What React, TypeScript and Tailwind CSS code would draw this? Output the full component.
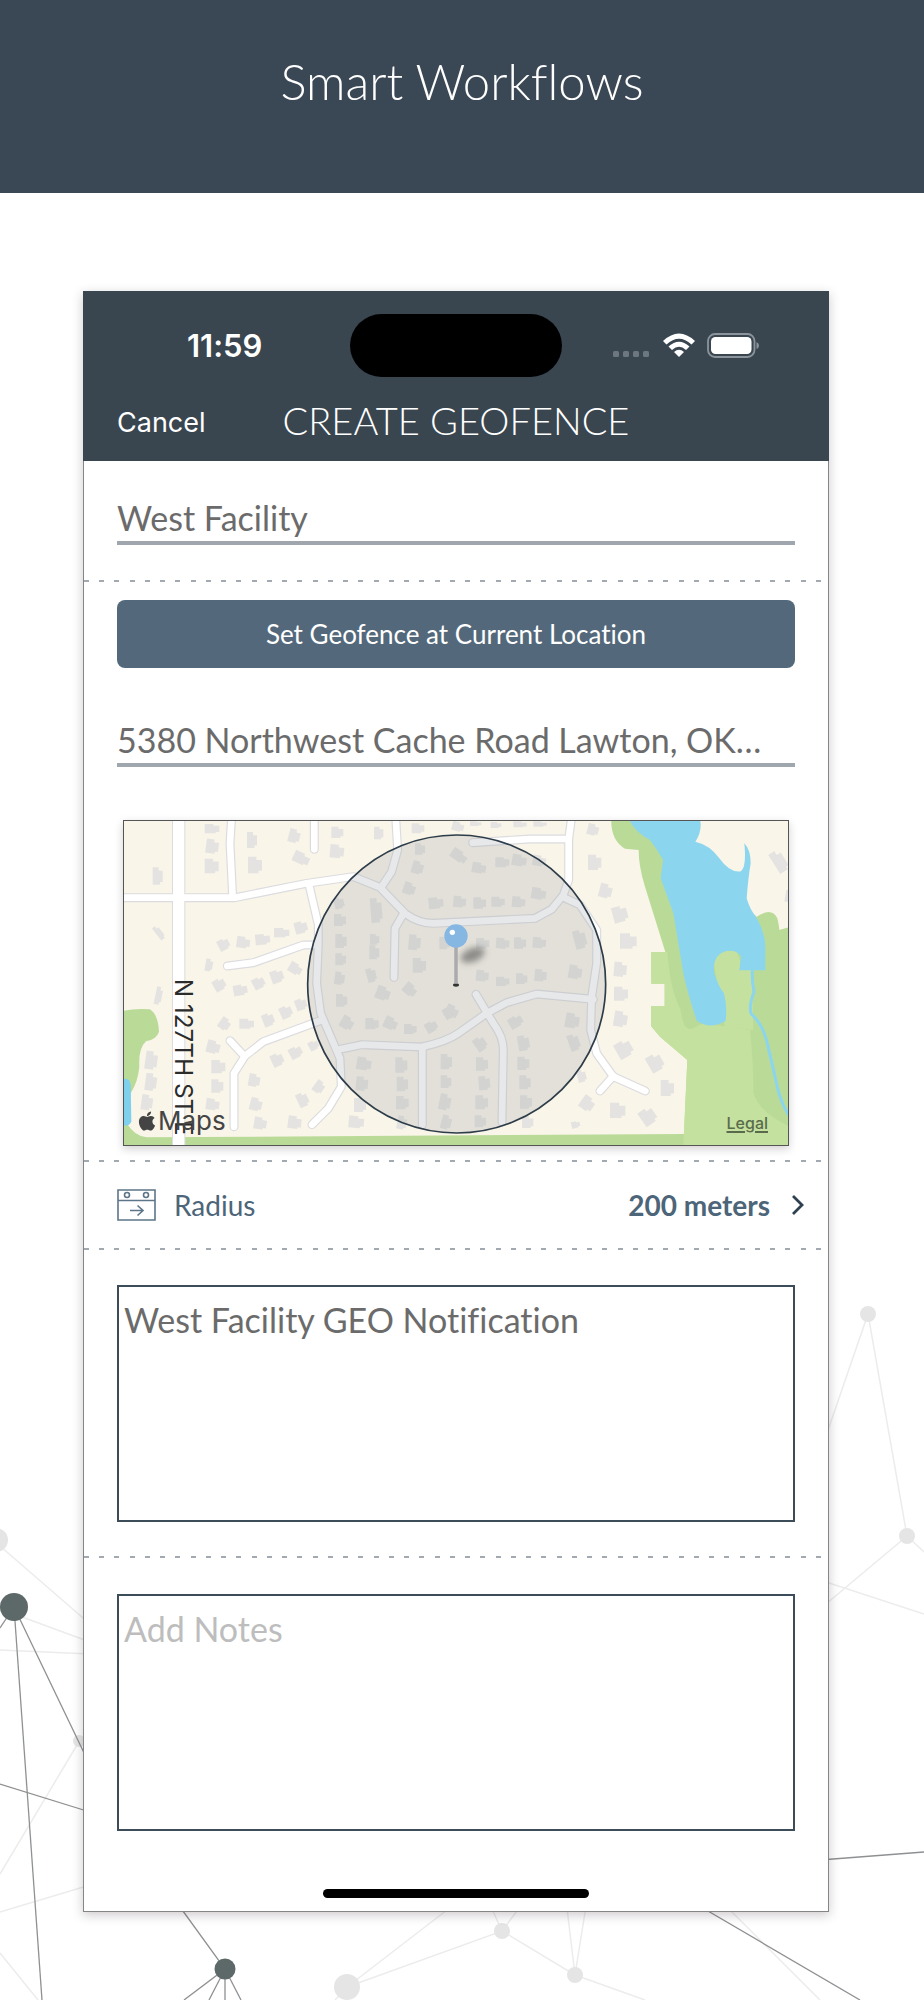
import { FaApple } from "react-icons/fa";

// x, y, width, height, rotation
const houses = [
  [284, 42, 44, 28, 0], [288, 88, 38, 42, 8], [284, 146, 42, 44, 0], [411, 66, 30, 48, 0], [414, 140, 42, 50, 0],
  [536, 58, 34, 40, 15], [549, 128, 50, 34, 25], [664, 50, 36, 34, 0], [660, 104, 42, 40, 5], [792, 50, 28, 38, 0],
  [905, 40, 38, 30, 0], [915, 100, 30, 34, 0], [128, 172, 30, 52, 0], [138, 345, 18, 46, -38], [136, 530, 20, 54, 12],
  [324, 386, 34, 34, -28], [380, 380, 40, 34, 8], [436, 372, 44, 32, -6], [492, 354, 46, 28, 0], [554, 334, 38, 36, -15],
  [286, 446, 22, 38, 10], [310, 506, 36, 36, -30], [370, 524, 42, 32, -10], [428, 502, 36, 34, -28], [482, 480, 38, 38, -20],
  [536, 460, 40, 32, 30], [556, 566, 34, 34, -20], [510, 588, 36, 36, -25], [458, 610, 34, 38, -22], [388, 626, 44, 30, 0],
  [328, 624, 32, 36, 35], [290, 692, 40, 38, 15], [304, 750, 42, 40, 0], [304, 808, 36, 40, 0], [288, 866, 40, 34, 8],
  [484, 730, 36, 38, -25], [538, 710, 38, 34, -28], [596, 692, 30, 28, -28], [416, 792, 34, 38, 10], [420, 864, 36, 38, 15],
  [432, 922, 38, 36, 10], [534, 918, 40, 38, 8], [562, 848, 32, 42, -25], [612, 812, 30, 38, 35], [716, 918, 46, 36, 5],
  [106, 724, 36, 54, 8], [106, 790, 34, 52, 8], [94, 854, 34, 46, 8],
  [672, 262, 30, 34, -15], [672, 312, 36, 36, 0], [676, 372, 34, 42, 0], [676, 430, 32, 36, 0], [674, 486, 30, 38, 8],
  [678, 552, 34, 38, 0], [782, 264, 34, 74, -5], [780, 372, 28, 32, 0], [778, 406, 30, 42, 0], [770, 474, 28, 42, -15],
  [692, 620, 38, 38, 30], [766, 624, 40, 34, 0], [822, 622, 40, 36, 25], [882, 642, 38, 30, 0], [946, 634, 36, 32, -30],
  [1006, 586, 38, 38, 25], [798, 530, 42, 40, 20], [880, 522, 40, 34, 40], [896, 374, 36, 46, 5], [908, 444, 40, 44, 0],
  [906, 154, 34, 38, 15], [880, 218, 36, 36, 20], [956, 262, 44, 34, -5], [740, 742, 44, 38, 10], [738, 800, 36, 42, 5],
  [732, 864, 36, 42, 0], [856, 742, 36, 46, 0], [860, 800, 34, 44, 0], [858, 858, 38, 40, 0], [992, 732, 34, 46, 0],
  [992, 796, 32, 38, 0], [988, 852, 34, 48, 12], [994, 916, 30, 42, 15], [862, 918, 28, 40, 12], [988, 380, 30, 38, 0],
  [1022, 122, 50, 32, 35], [1026, 36, 36, 28, 15], [1086, 158, 42, 32, 10], [1156, 142, 42, 30, 0], [1206, 134, 44, 34, 10],
  [1268, 136, 40, 32, 10], [1080, 34, 34, 14, 0], [1142, 36, 32, 18, 0], [1210, 34, 40, 18, 0], [1270, 34, 40, 16, 0],
  [1030, 258, 38, 34, 5], [1090, 262, 38, 34, 0], [1144, 260, 40, 30, 0], [1206, 260, 40, 32, 5], [1264, 234, 44, 34, 10],
  [1098, 384, 40, 32, 0], [1158, 384, 40, 32, 5], [1212, 382, 36, 34, 0], [1268, 382, 40, 32, 5], [1098, 480, 38, 34, 5],
  [1158, 500, 40, 28, 0], [1218, 490, 34, 32, 0], [1274, 478, 36, 36, 5], [1392, 360, 36, 56, -15], [1376, 466, 40, 40, 10],
  [1366, 610, 42, 44, 10], [1376, 672, 32, 50, -20], [1196, 618, 42, 34, -30], [1094, 680, 34, 42, -35], [1224, 676, 34, 46, -10],
  [1222, 740, 36, 40, 0], [1228, 796, 34, 42, 0], [1230, 856, 36, 40, 0], [1236, 918, 34, 36, 0], [1098, 742, 36, 40, 0],
  [1106, 798, 34, 42, -5], [1096, 856, 38, 42, 0], [1094, 916, 34, 36, 0], [1000, 590, 36, 34, -30], [1402, 780, 26, 36, -15],
  [1432, 42, 34, 34, 15], [1434, 134, 40, 46, 0], [1468, 222, 38, 42, 15], [1508, 288, 44, 48, -15], [1530, 370, 50, 46, 0],
  [1512, 456, 38, 44, 5], [1512, 530, 42, 42, 0], [1512, 604, 40, 46, 10], [1518, 692, 48, 50, -30], [1614, 732, 44, 52, -30],
  [1412, 860, 40, 42, 35], [1500, 878, 46, 46, 0], [1592, 894, 44, 50, -35], [1652, 810, 40, 48, 0], [1384, 934, 26, 20, -15],
  [1990, 120, 36, 68, -32], [2026, 240, 16, 36, 10],
];

const roads = [
  "M39 263H375L590 220L730 200L810 232L885 310Q925 340 970 340L1275 325L1325 298L1360 255L1376 210V88L1385 20",
  "M365 20L360 100L368 260",
  "M613 20V118",
  "M857 20L863 120L845 185L815 230",
  "M598 228L625 345V400L620 520L632 610L690 745L694 830L655 895L606 944",
  "M352 468L430 458L580 405H622",
  "M636 630L460 695L405 738L372 790V950",
  "M360 692L400 735",
  "M878 315L855 355L852 502",
  "M690 718L755 704L935 711Q1010 695 1045 670L1130 610L1190 578L1280 552L1450 568",
  "M937 712V944",
  "M1098 553L1150 640Q1180 680 1180 720L1176 936",
  "M1360 262L1410 285L1460 360L1460 460L1445 560L1442 660L1460 730L1510 800L1606 843",
  "M1510 798L1470 843",
  "M1088 98L1260 87H1376",
];

const background = {
  faint: [
    "M0 1546L90 1624", "M14 1614L90 1642", "M0 1650L90 1654", "M80 1740L0 1874", "M0 1912L90 1885", "M0 1953L38 2000",
    "M868 1314L826 1436", "M868 1314L907 1536L826 1604", "M907 1536L924 1552", "M826 1582L924 1614",
    "M347 1987L460 1900", "M347 1987L502 1931L575 1975L645 2000", "M488 1900L502 1931L522 1904", "M566 1900L575 1975L587 1900",
    "M720 1900L820 2000", "M347 1987L335 2000",
  ],
  dark: [
    "M14 1607L0 1628", "M14 1607L42 2000", "M14 1607L86 1757", "M0 1784L90 1812", "M175 1900L225 1969L184 2000",
    "M225 1969L209 2000", "M225 1969V2000", "M225 1969L241 2000", "M820 1860L924 1852", "M696 1904L860 2000",
  ],
};

function Network() {
  return (
    <svg viewBox="0 0 924 2000" className="absolute bottom-0 left-0 -z-10 w-full" fill="none" aria-hidden="true">
      <g stroke="#ececec" strokeWidth="1.5">
        {background.faint.map((d) => <path key={d} d={d} />)}
      </g>
      <g fill="#e5e5e5">
        <circle cx="-4" cy="1540" r="12" />
        <circle cx="79" cy="1741" r="6" />
        <circle cx="868" cy="1314" r="8" />
        <circle cx="907" cy="1536" r="8" />
        <circle cx="347" cy="1987" r="13" />
        <circle cx="502" cy="1931" r="8" />
        <circle cx="575" cy="1975" r="8" />
      </g>
      <g stroke="#8e9092" strokeWidth="1.3">
        {background.dark.map((d) => <path key={d} d={d} />)}
      </g>
      <circle cx="14" cy="1607" r="14" fill="#5d6868" />
      <circle cx="225" cy="1969" r="10.500" fill="#5d6868" />
    </svg>
  );
}

function StatusIcons() {
  return (
    <div className="flex items-center">
      <svg width="38" height="26" viewBox="0 0 38 26" fill="#6c7780" aria-hidden="true">
        <rect x="0" y="18" width="6" height="6" rx="1.500" />
        <rect x="10" y="18" width="6" height="6" rx="1.500" />
        <rect x="20" y="18" width="6" height="6" rx="1.500" />
        <rect x="30" y="18" width="6" height="6" rx="1.500" />
      </svg>
      <svg className="ml-3" width="32" height="26" viewBox="0 0 32 26" fill="#fff" aria-hidden="true">
        <path d="M0 8Q16-7 32 8L28.500 11.500Q16 0 3.500 11.500Z" />
        <path d="M5.500 13.500Q16 4 26.500 13.500L23 17Q16 10.500 9 17Z" />
        <path d="M11 19Q16 14.500 21 19L16 24Z" />
      </svg>
      <svg className="ml-3" width="54" height="26" viewBox="0 0 54 26" fill="none" aria-hidden="true">
        <rect x="1" y="1" width="46.500" height="23" rx="7" stroke="#8b949b" strokeWidth="1.800" />
        <rect x="4" y="4" width="40.500" height="17" rx="4.500" fill="#fff" />
        <path d="M49.500 9Q52 10 52 12.500Q52 15 49.500 16Z" fill="#8b949b" />
      </svg>
    </div>
  );
}

function GeofenceMap() {
  return (
    <div className="relative mx-[39px] mt-[53px] border border-[#555] shadow-[0_3px_8px_rgba(60,40,50,0.22)]">
      <svg viewBox="42 33 1992 972" className="block h-auto w-full" fill="none" role="img" aria-label="Map">
        <path d="M0 0H2100V1100H0Z" fill="#f9f5e8" />
        {/* parks and water */}
        <path d="M39 603Q75 594 120 598Q145 615 147 665Q140 688 108 694Q85 715 88 770Q84 815 62 850L50 940Q75 980 110 982L1722 972L1732 750L1650 680L1623 648V588H1664V521H1624V426H1666L1605 230Q1586 170 1586 120L1545 116Q1500 90 1504 20H1600L1940 320Q1985 290 2002 325Q2007 345 2008 360L2060 345V1030H39Z" fill="#badb98" />
        <path d="M1623 426H1672Q1680 540 1712 600Q1720 670 1750 655L1780 640L1920 660Q1930 760 1930 850Q1950 910 2040 950V1006H1720L1732 750L1650 680L1623 648V588H1664V521H1624Z" fill="#c5e19f" />
        <path d="M1810 450Q1830 410 1880 425L1900 480H1925L1930 660L1845 650Z" fill="#c5e19f" />
        <path d="M39 808Q58 800 62 825L64 935Q55 952 39 945Z" fill="#7ed0ec" />
        <path d="M1555 20H1768Q1780 60 1756 95Q1800 105 1828 145Q1860 190 1893 184Q1910 170 1903 100Q1922 120 1922 160Q1915 200 1910 265Q1920 300 1938 320Q1968 370 1966 420V481H1888L1893 440Q1880 418 1850 423Q1805 435 1813 490Q1825 530 1842 550Q1852 590 1847 633Q1800 660 1760 632Q1730 540 1720 490Q1705 400 1690 310L1652 205L1659 150Q1640 115 1620 90Q1565 60 1555 20Z" fill="#8bd5ef" />
        <path d="M1927 480Q1925 510 1932 545Q1915 590 1924 612Q1960 645 1972 700L1995 800Q2010 880 2040 920" stroke="#8bd5ef" strokeWidth="9" />

        {houses.map(([x, y, w, h, r]) => (
          <path
            key={`${x}-${y}`}
            d={`M${x} ${y}h${w * 0.6}v${h * 0.2}h${w * 0.4}v${h * 0.65}h${-w * 0.25}v${h * 0.15}h${-w * 0.75}z`}
            transform={`rotate(${r} ${x + w / 2} ${y + h / 2})`}
            fill="#e4e3e1"
          />
        ))}

        <g strokeLinecap="round" strokeLinejoin="round">
          <path d="M206 20V1020" stroke="#dcdce0" strokeWidth="40" />
          {roads.map((d) => <path key={d} d={d} stroke="#dcdce0" strokeWidth="27" />)}
          <path d="M206 20V1020" stroke="#fff" strokeWidth="34" />
          {roads.map((d) => <path key={d} d={d} stroke="#fff" strokeWidth="20" />)}
        </g>

        <circle cx="1040" cy="522" r="447" fill="#a0a5a8" fillOpacity="0.25" stroke="#2d3c49" strokeWidth="5" />

        {/* pin */}
        <defs>
          <filter id="pinShadow" x="-50%" y="-50%" width="200%" height="200%">
            <feGaussianBlur stdDeviation="10" />
          </filter>
        </defs>
        <ellipse cx="1088" cy="435" rx="38" ry="20" transform="rotate(-22 1088 435)" fill="#555" fillOpacity="0.6" filter="url(#pinShadow)" />
        <ellipse cx="1038" cy="525" rx="9" ry="5" fill="#333" />
        <path d="M1038 405V522" stroke="#929296" strokeWidth="9" />
        <path d="M1038 405V520" stroke="#c4c4c7" strokeWidth="3" />
        <circle cx="1038" cy="378" r="35" fill="#86b7e3" />
        <circle cx="1027" cy="367" r="8" fill="#fff" />

        <text transform="translate(194 506) rotate(90)" fontSize="73" fill="#2b2b2b" className="font-[Inter,sans-serif] font-normal">
          N 127TH ST E
        </text>
      </svg>
      <div className="absolute bottom-2 left-3 flex items-center font-[Inter,sans-serif] text-[26px] leading-8 font-normal text-[#444]">
        <FaApple className="size-[22px]" aria-hidden="true" />
        Maps
      </div>
      <a href="#legal" className="absolute right-5 bottom-3 font-[Inter,sans-serif] text-[16px] leading-5 font-medium text-[#5a6b4c] underline decoration-2 underline-offset-2">
        Legal
      </a>
    </div>
  );
}

function Divider({ className = "" }) {
  return (
    <div
      className={`h-[2px] bg-[repeating-linear-gradient(90deg,#a3a9b0_0_5px,transparent_5px_15px,#a3a9b0_15px_20px,transparent_20px_30px,#a3a9b0_30px_35px,transparent_35px_46px,#a3a9b0_46px_51px,transparent_51px_61px)] ${className}`}
    />
  );
}

const field = "block h-[51px] w-full border-b-4 border-[#9fa6ae] text-[34px] text-[#6b6b6b] outline-none";
const box = "block h-[237px] w-full resize-none border-2 border-[#3c4c59] px-[5px] py-[11px] text-[34px] leading-[44px] text-[#6b6b6b] outline-none placeholder:text-[#bdbdbd]";

export default function App() {
  return (
    <div className="relative isolate overflow-hidden bg-white pb-[88px] font-[Lato,sans-serif] font-normal [font-variant-ligatures:none]">
      <Network />
      <header className="flex h-[193px] justify-center bg-[#3a4754] pt-[50px]">
        <h1 className="text-[49px] leading-[62px] font-light text-white">Smart Workflows</h1>
      </header>

      <main className="mt-[98px] mr-[95px] ml-[83px] bg-white shadow-[0_3px_10px_rgba(60,40,50,0.25)]">
        <div className="h-[170px] bg-[#394650] pt-[23px] text-white">
          <div className="grid grid-cols-[1fr_212px_1fr] items-center">
            <span className="pl-[104px] font-[Inter,sans-serif] text-[31px] leading-9 font-semibold">11:59</span>
            <div className="h-[63px] rounded-full bg-black" />
            <div className="pl-[51px]">
              <StatusIcons />
            </div>
          </div>
          <div className="mt-5 grid grid-cols-[1fr_auto_1fr] items-center px-[34px]">
            <button type="button" className="justify-self-start pt-[6px] font-[Inter,sans-serif] text-[27px] leading-10">Cancel</button>
            <h2 className="text-[38px] leading-[46px] font-light">CREATE GEOFENCE</h2>
          </div>
        </div>

        <form className="border-x border-b border-[#858585] pb-[13px]">
          <div className="px-[33px] pt-[33px]">
            <input aria-label="Geofence name" className={field} defaultValue="West Facility" />
          </div>
          <Divider className="mt-[35px]" />
          <div className="px-[33px] pt-[18px]">
            <button type="button" className="block h-[68px] w-full rounded-lg bg-[#53697b] text-[26px] text-white">
              Set Geofence at Current Location
            </button>
            <input aria-label="Address" className={`${field} mt-12`} defaultValue="5380 Northwest Cache Road Lawton, OK…" />
          </div>

          <GeofenceMap />

          <Divider className="mt-[14px]" />
          <button type="button" className="flex h-[86px] w-full items-center pr-6 pl-[33px] text-[28px] text-[#4c6579]">
            <svg width="39" height="32" viewBox="0 0 39 32" fill="none" stroke="#5c7588" strokeWidth="1.600" aria-hidden="true">
              <path d="M1 1H38V31H1ZM1 11.500H38" />
              <circle cx="10" cy="6" r="2.500" />
              <circle cx="29" cy="6" r="2.500" />
              <path d="M13 21.500H26M20.500 16.500L26 21.500L20.500 26.500" />
            </svg>
            <span className="ml-[18px]">Radius</span>
            <span className="ml-auto font-bold">200 meters</span>
            <svg className="ml-[22px]" width="12" height="20" viewBox="0 0 12 20" fill="none" stroke="#2f4050" strokeWidth="2.800" aria-hidden="true">
              <path d="M1 1L10 10L1 19" />
            </svg>
          </button>
          <Divider />

          <div className="px-[33px] pt-[35px]">
            <textarea aria-label="Notification" className={box} defaultValue="West Facility GEO Notification" />
          </div>
          <Divider className="mt-[34px]" />
          <div className="px-[33px] pt-9">
            <textarea aria-label="Notes" className={box} placeholder="Add Notes" />
          </div>
          <div className="mx-auto mt-[58px] h-[9px] w-[266px] rounded-full bg-black" />
        </form>
      </main>
    </div>
  );
}
